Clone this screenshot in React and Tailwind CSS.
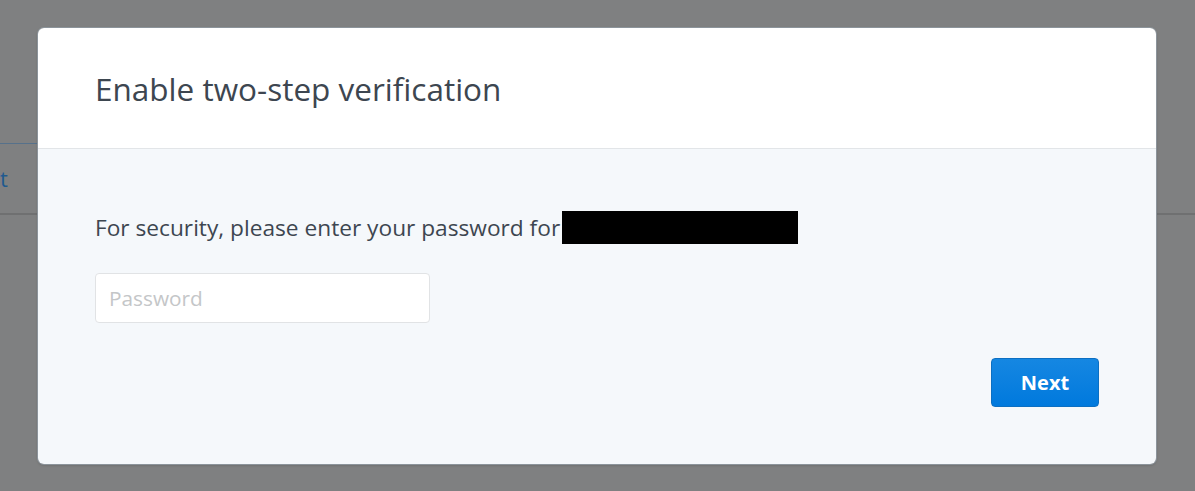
import React from "react";

const App = () => {
  return (
    <div
      className="relative h-[491px] w-full overflow-hidden bg-[#7f8081]"
      style={{ fontFamily: '"Open Sans", "Noto Sans", sans-serif' }}
    >
      {/* page behind the overlay */}
      <div className="pt-[143px]">
        <div className="flex h-[72px] border-b-2 border-[#6f7071]">
          <div className="flex w-[37px] items-center overflow-hidden border-t border-[#56718b] pb-[2px]">
            <span className="whitespace-nowrap text-[22px] leading-none text-[#1f5a8f]">t</span>
          </div>
        </div>
      </div>

      {/* modal */}
      <div className="absolute left-[38px] top-[28px] w-[1118px] overflow-hidden rounded-[6px] shadow-[0_0_0_1px_#8c949b,0_1px_3px_rgba(0,0,0,0.25)]">
        <div className="flex h-[121px] items-center border-b border-[#e2e5e8] bg-white px-[57px] pt-[2px]">
          <h1 className="text-[31.5px] font-normal text-[#3d4650]">Enable two-step verification</h1>
        </div>

        <div className="flex flex-col bg-[#f5f8fb] px-[57px] pb-[57px] pt-[62px]">
          <div className="flex items-center text-[22.7px] leading-[28px] text-[#3d4650]">
            <span>For security, please enter your password for</span>
            <span className="ml-[2px] inline-block h-[33px] w-[236px] bg-black" />
          </div>

          <input
            type="password"
            placeholder="Password"
            className="mt-[29px] h-[50px] w-[335px] rounded-[4px] border border-[#e1e3e5] bg-white px-[13px] text-[20.8px] text-[#3d4650] outline-none placeholder:text-[#c4c6c8]"
          />

          <div className="mt-[35px] flex justify-end">
            <button className="h-[49px] w-[108px] rounded-[4px] border border-[#0c6fc2] bg-gradient-to-b from-[#1587e2] to-[#0079dd] text-[20px] font-bold text-white">
              Next
            </button>
          </div>
        </div>
      </div>
    </div>
  );
};

export default App;
